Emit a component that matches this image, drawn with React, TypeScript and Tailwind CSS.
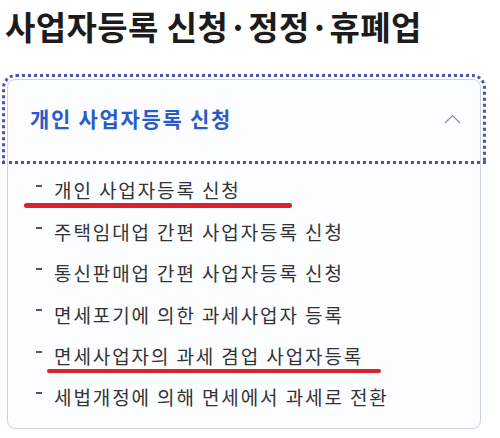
import { useState } from "react"

const items = [
  { label: "개인 사업자등록 신청", mark: true },
  { label: "주택임대업 간편 사업자등록 신청" },
  { label: "통신판매업 간편 사업자등록 신청" },
  { label: "면세포기에 의한 과세사업자 등록" },
  { label: "면세사업자의 과세 겸업 사업자등록", mark: true },
  { label: "세법개정에 의해 면세에서 과세로 전환" },
]

export default function App() {
  const [open, setOpen] = useState(true)

  return (
    <div className="w-[500px] h-[438px] overflow-hidden bg-white font-['Noto_Sans_CJK_KR','Noto_Sans',sans-serif]">
      <h1 className="pl-[5px] pt-[6px] text-[33px] leading-[40px] font-bold text-[#1c1c1c] tracking-[0.4px]">
        사업자등록 신청·정정·휴폐업
      </h1>

      <div className="mt-[33px] ml-[7px] w-[474px] rounded-[8px] border border-[#c9d3e4] bg-[#fbfdff]">
        {/* accordion header, shown with its keyboard focus ring */}
        <button
          type="button"
          onClick={() => setOpen(!open)}
          className="flex h-[78px] w-full items-center justify-between rounded-t-[8px] pl-[22px] pr-[19px] text-left outline-[3px] outline-dotted outline-offset-[3px] outline-[#4a56a6]"
        >
          <span className="text-[21px] font-bold text-[#2b5cc6] tracking-[1.7px]">
            개인 사업자등록 신청
          </span>
          <svg width="17" height="10" viewBox="0 0 17 10" fill="none" className={open ? "" : "rotate-180"}>
            <path d="M1 9L8.5 1.5L16 9" stroke="#8a8f98" strokeWidth="1.2" />
          </svg>
        </button>

        {open && (
          <ul className="pt-[12px] pb-[10px] pl-[28px]">
            {items.map((it) => (
              <li key={it.label} className="relative flex h-[41.4px] items-center">
                <span className="mb-[9px] mr-[12px] h-[2px] w-[6px] bg-[#555]" />
                <a href="#" className="text-[19px] text-[#333] tracking-[1.9px]">
                  {it.label}
                </a>
                {it.mark && (
                  <span
                    className={
                      it.label.length > 12
                        ? "absolute left-[11px] top-[33px] h-[4px] w-[334px] rounded-full bg-[#d8232c]"
                        : "absolute left-[-12px] top-[33px] h-[5px] w-[268px] rounded-full bg-[#d8232c]"
                    }
                  />
                )}
              </li>
            ))}
          </ul>
        )}
      </div>
    </div>
  )
}
